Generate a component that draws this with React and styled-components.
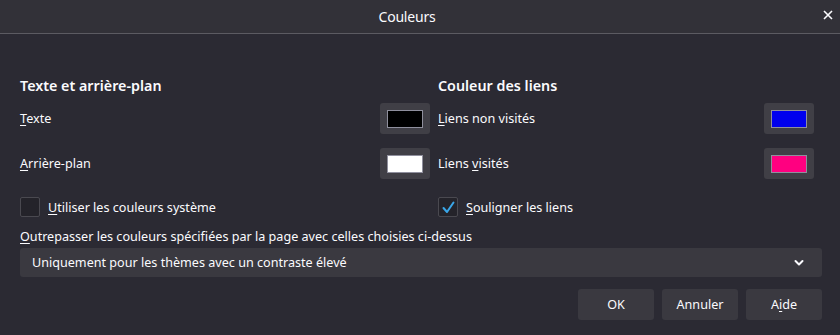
import React from "react";
import styled, { createGlobalStyle } from "styled-components";

const GlobalStyle = createGlobalStyle`
  html, body {
    margin: 0;
    padding: 0;
    background: #2b2a33;
  }
  body {
    font-family: "Noto Sans", "Open Sans", sans-serif;
    color: #fbfbfe;
  }
`;

const Dialog = styled.div`
  width: 840px;
  height: 335px;
  background: #2b2a33;
  display: flex;
  flex-direction: column;
`;

const TitleBar = styled.div`
  height: 33px;
  border-bottom: 1px solid #5c5b62;
  background: #323138;
  display: flex;
  align-items: center;
  justify-content: center;
  padding-right: 26px;
  position: relative;
  font-size: 14px;
  letter-spacing: -0.2px;
`;

const Close = styled.button`
  position: absolute;
  right: 4px;
  top: 7px;
  width: 16px;
  height: 16px;
  padding: 0;
  border: none;
  background: none;
  display: flex;
  align-items: center;
  justify-content: center;
`;

const Body = styled.div`
  padding: 42px 18px 0 20px;
  display: flex;
  flex-direction: column;
`;

const Columns = styled.div`
  display: flex;
  gap: 8px;
`;

const Column = styled.div`
  width: ${(p) => p.$w}px;
  display: flex;
  flex-direction: column;
`;

const Heading = styled.h2`
  margin: 0 0 7px;
  font-size: 14.3px;
  font-weight: 600;
  line-height: 20px;
`;

const Row = styled.div`
  height: 31px;
  margin-bottom: 14px;
  display: flex;
  align-items: center;
  justify-content: space-between;
  font-size: 12.6px;
`;

const Swatch = styled.button`
  width: 50px;
  height: 31px;
  padding: 0;
  border: none;
  border-radius: 3px;
  background: #403f46;
  display: flex;
  align-items: center;
  justify-content: center;
  span {
    width: 34px;
    height: 16px;
    background: ${(p) => p.$color};
    border: 1px solid #8f8f9d;
  }
`;

const CheckRow = styled.label`
  display: flex;
  align-items: center;
  gap: 8px;
  height: 20px;
  margin-top: 4px;
  font-size: 12.6px;
`;

const Box = styled.span`
  width: 18px;
  height: 18px;
  border: 1px solid #4a4950;
  border-radius: 2px;
  background: #24232a;
  display: flex;
  align-items: center;
  justify-content: center;
`;

const Key = styled.u`
  text-decoration: underline;
  text-underline-offset: 2px;
`;

const OverrideLabel = styled.div`
  margin-top: 11px;
  font-size: 12.6px;
  line-height: 18px;
`;

const Select = styled.div`
  margin-top: 2px;
  height: 29px;
  border-radius: 3px;
  background: #3a3940;
  display: flex;
  align-items: center;
  justify-content: space-between;
  padding: 0 18px 0 12px;
  font-size: 12.6px;
`;

const Buttons = styled.div`
  margin-top: 12px;
  display: flex;
  justify-content: flex-end;
  gap: 8px;
`;

const Button = styled.button`
  width: 76px;
  height: 31px;
  border: none;
  border-radius: 3px;
  background: #3a3940;
  color: #fbfbfe;
  font-family: inherit;
  font-size: 12.6px;
`;

const Check = () => (
  <svg width="15" height="15" viewBox="0 0 15 15">
    <path d="M2.5 8 L6 12 L12.5 2.5" fill="none" stroke="#3aa6e8" strokeWidth="2" strokeLinecap="round" strokeLinejoin="round" />
  </svg>
);

const Chevron = () => (
  <svg width="10" height="8" viewBox="0 0 10 8">
    <path d="M1.5 2 L5 5.5 L8.5 2" fill="none" stroke="#fbfbfe" strokeWidth="2" strokeLinecap="round" strokeLinejoin="round" />
  </svg>
);

export default function App() {
  return (
    <Dialog>
      <GlobalStyle />
      <TitleBar>
        Couleurs
        <Close aria-label="Fermer">
          <svg width="10" height="10" viewBox="0 0 10 10">
            <path d="M1 1 L9 9 M9 1 L1 9" stroke="#fbfbfe" strokeWidth="1.6" />
          </svg>
        </Close>
      </TitleBar>
      <Body>
        <Columns>
          <Column $w={410}>
            <Heading>Texte et arrière-plan</Heading>
            <Row>
              <span><Key>T</Key>exte</span>
              <Swatch $color="#000000"><span /></Swatch>
            </Row>
            <Row>
              <span><Key>A</Key>rrière-plan</span>
              <Swatch $color="#ffffff"><span /></Swatch>
            </Row>
            <CheckRow>
              <Box />
              <span><Key>U</Key>tiliser les couleurs système</span>
            </CheckRow>
          </Column>
          <Column $w={376}>
            <Heading>Couleur des liens</Heading>
            <Row>
              <span><Key>L</Key>iens non visités</span>
              <Swatch $color="#0000ee"><span /></Swatch>
            </Row>
            <Row>
              <span>Liens <Key>v</Key>isités</span>
              <Swatch $color="#ff0080"><span /></Swatch>
            </Row>
            <CheckRow>
              <Box><Check /></Box>
              <span><Key>S</Key>ouligner les liens</span>
            </CheckRow>
          </Column>
        </Columns>
        <OverrideLabel>
          <Key>O</Key>utrepasser les couleurs spécifiées par la page avec celles choisies ci-dessus
        </OverrideLabel>
        <Select>
          <span>Uniquement pour les thèmes avec un contraste élevé</span>
          <Chevron />
        </Select>
        <Buttons>
          <Button>OK</Button>
          <Button>Annuler</Button>
          <Button>A<Key>i</Key>de</Button>
        </Buttons>
      </Body>
    </Dialog>
  );
}
